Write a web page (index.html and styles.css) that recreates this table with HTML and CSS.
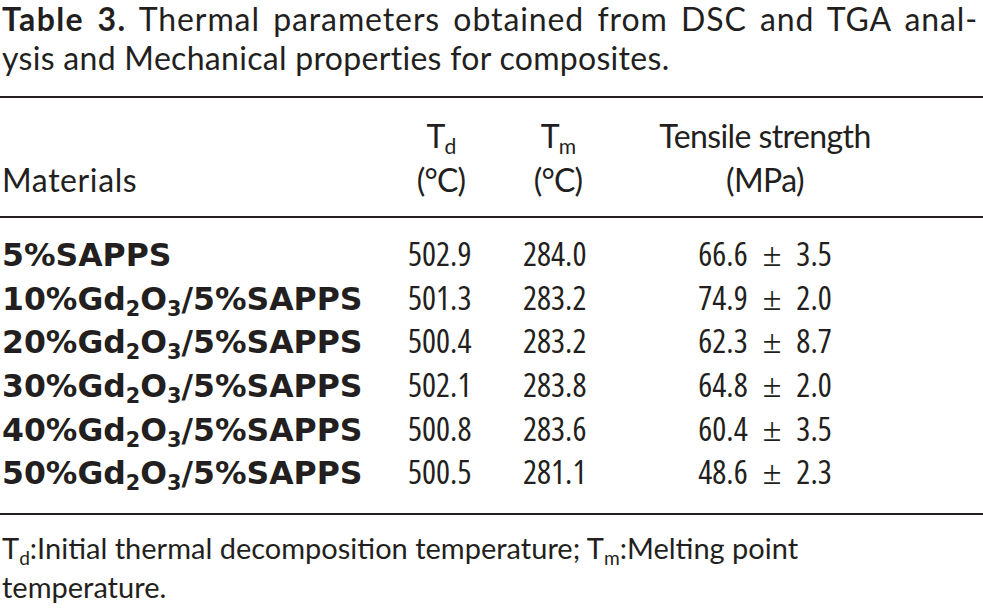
FILE: index.html
```html
<!DOCTYPE html>
<html lang="en">
<head>
<meta charset="utf-8">
<title>Table 3</title>
<link rel="stylesheet" href="styles.css">
</head>
<body>
<div class="page">
  <div class="caption">
    <span class="line line-1"><span class="label">Table 3.</span> Thermal parameters obtained from DSC and TGA anal-</span>
    <span class="line line-2">ysis and Mechanical properties for composites.</span>
  </div>
  <table class="data">
    <colgroup>
      <col class="c-mat">
      <col class="c-td">
      <col class="c-tm">
      <col class="c-ts">
    </colgroup>
    <thead>
      <tr>
        <th class="mat">Materials</th>
        <th class="hd">T<sub>d</sub><br>(°C)</th>
        <th class="hd">T<sub>m</sub><br>(°C)</th>
        <th class="ts">Tensile strength<br>(MPa)</th>
      </tr>
    </thead>
    <tbody>
      <tr class="first">
        <td class="mat">5%SAPPS</td><td class="num">502.9</td><td class="num tm">284.0</td><td class="ts">66.6<span class="pm">±</span>3.5</td>
      </tr>
      <tr>
        <td class="mat">10%Gd<sub>2</sub>O<sub>3</sub>/5%SAPPS</td><td class="num">501.3</td><td class="num tm">283.2</td><td class="ts">74.9<span class="pm">±</span>2.0</td>
      </tr>
      <tr>
        <td class="mat">20%Gd<sub>2</sub>O<sub>3</sub>/5%SAPPS</td><td class="num">500.4</td><td class="num tm">283.2</td><td class="ts">62.3<span class="pm">±</span>8.7</td>
      </tr>
      <tr>
        <td class="mat">30%Gd<sub>2</sub>O<sub>3</sub>/5%SAPPS</td><td class="num">502.1</td><td class="num tm">283.8</td><td class="ts">64.8<span class="pm">±</span>2.0</td>
      </tr>
      <tr>
        <td class="mat">40%Gd<sub>2</sub>O<sub>3</sub>/5%SAPPS</td><td class="num">500.8</td><td class="num tm">283.6</td><td class="ts">60.4<span class="pm">±</span>3.5</td>
      </tr>
      <tr class="last">
        <td class="mat">50%Gd<sub>2</sub>O<sub>3</sub>/5%SAPPS</td><td class="num">500.5</td><td class="num tm">281.1</td><td class="ts">48.6<span class="pm">±</span>2.3</td>
      </tr>
    </tbody>
  </table>
  <p class="note">T<sub>d</sub>:Initial thermal decomposition temperature; T<sub>m</sub>:Melting point<br>temperature.</p>
</div>
</body>
</html>
```

FILE: styles.css
```css
html, body {
  margin: 0;
  padding: 0;
  background: #ffffff;
}

body {
  font-family: "Lato", "Open Sans", "Liberation Sans", sans-serif;
  color: #231f20;
}

.page {
  width: 983px;
  height: 609px;
  overflow: hidden;
}

/* ---------- caption ---------- */
.caption {
  font-size: 32px;
  line-height: 30px;
  padding-left: 2px;
  width: 978px;
  height: 96px;
  box-sizing: border-box;
}

.caption .line {
  display: block;
  white-space: nowrap;
}

.caption .line-1 {
  padding-top: 4px;
  letter-spacing: 0.9px;
  text-align: justify;
  text-align-last: justify;
  white-space: normal;
}

.caption .line-2 {
  margin-top: 9px;
  letter-spacing: 0.3px;
}

.caption .label {
  font-weight: 700;
  letter-spacing: 1.4px;
}

sub {
  font-size: 0.66em;
  line-height: 0;
  vertical-align: -0.3em;
}

/* ---------- table ---------- */
.data {
  width: 983px;
  border-collapse: collapse;
  table-layout: fixed;
}

.c-mat { width: 400px; }
.c-td { width: 82px; }
.c-tm { width: 152px; }
.c-ts { width: 349px; }

.data thead tr {
  border-top: 2px solid #231f20;
  border-bottom: 2px solid #231f20;
}

.data th {
  font-size: 32px;
  font-weight: 400;
  line-height: 44px;
  padding: 15.6px 0 14.4px;
  text-align: center;
  vertical-align: bottom;
  white-space: nowrap;
}

.data th.mat {
  text-align: left;
  padding-left: 2px;
  letter-spacing: 0.6px;
}

.data th.hd {
  letter-spacing: -0.8px;
}

.data th.ts {
  padding-right: 87px;
  letter-spacing: -0.6px;
}

.data td {
  padding: 0;
  white-space: nowrap;
  vertical-align: baseline;
}

.data tr.first td { padding-top: 16.3px; }
.data tr.last td { padding-bottom: 17px; }
.data tbody tr.last { border-bottom: 2px solid #231f20; }

.data td.mat {
  font-family: "DejaVu Sans", "Liberation Sans", sans-serif;
  font-weight: 700;
  font-size: 31.5px;
  line-height: 43.6px;
  padding-left: 2px;
}

.data td.num,
.data td.ts {
  font-family: "Open Sans", "Lato", sans-serif;
  font-stretch: 75%;
  font-size: 33px;
  line-height: 40px;
}

.data td.num {
  text-align: left;
  padding-left: 8px;
}

.data td.num.tm {
  padding-left: 41px;
}

.data td.ts {
  text-align: center;
  padding-right: 87px;
}

.pm {
  font-family: "Liberation Serif", serif;
  font-size: 34px;
  margin: 0 15px;
}

/* ---------- footnote ---------- */
.note {
  margin: 0;
  padding: 13.3px 0 0 2px;
  font-size: 29px;
  line-height: 39px;
  white-space: nowrap;
}
```
